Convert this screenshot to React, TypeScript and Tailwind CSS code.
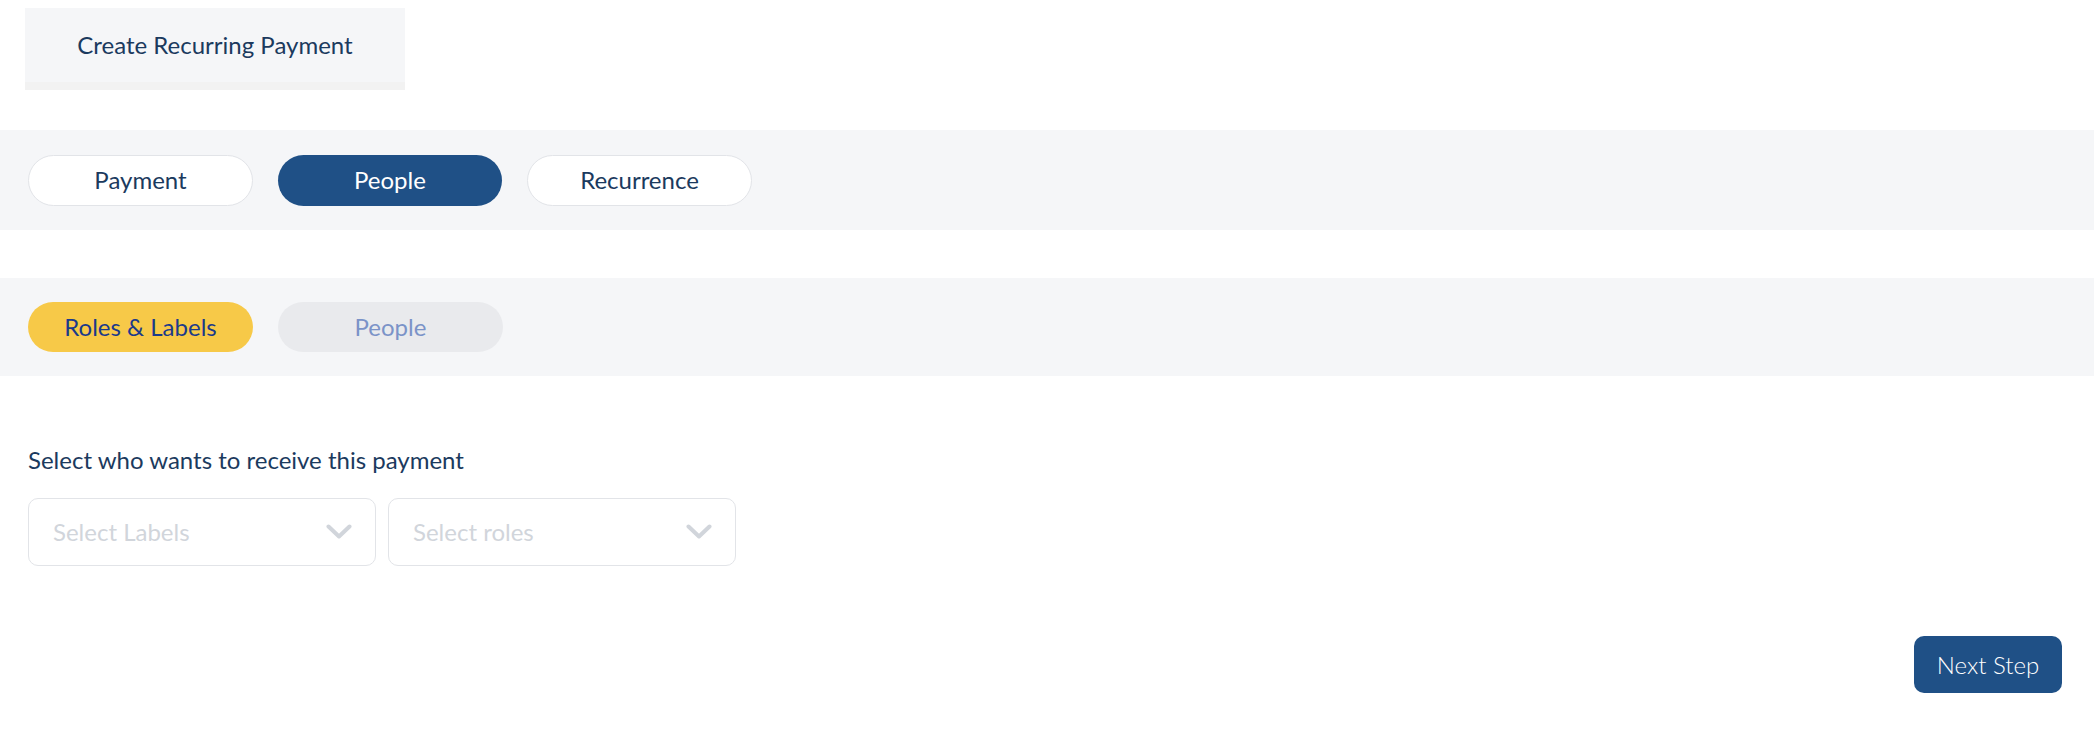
import React from "react";

function Chevron() {
  return (
    <svg width="26" height="16" viewBox="0 0 26 16" fill="none">
      <path d="M2.5 2.5 L13 12.5 L23.5 2.5" stroke="#d1d5db" strokeWidth="4" strokeLinecap="round" strokeLinejoin="round" />
    </svg>
  );
}

export default function App() {
  const font = { fontFamily: "Lato, 'Open Sans', sans-serif" };
  return (
    <div className="min-h-[730px] w-full bg-white text-[#1b3a5e]" style={font}>
      <div className="pt-2 pl-[25px]">
        <div className="flex h-[82px] w-[380px] items-center justify-center border-b-8 border-[#f2f2f2] bg-[#f5f6f8] text-[24px] text-[#1b3a5e]">
          <span>Create Recurring Payment</span>
        </div>
      </div>

      <div className="mt-10 flex h-[100px] items-center gap-[25px] bg-[#f5f6f8] px-7">
        <button className="h-[51px] w-[225px] rounded-full border border-[#e2e4e8] bg-white text-[24px] font-normal text-[#1b3a5e]">Payment</button>
        <button className="h-[51px] w-[224px] rounded-full bg-[#1f5086] text-[24px] font-normal text-white">People</button>
        <button className="h-[51px] w-[225px] rounded-full border border-[#e2e4e8] bg-white text-[24px] font-normal text-[#1b3a5e]">Recurrence</button>
      </div>

      <div className="mt-12 flex h-[98px] items-center gap-[25px] bg-[#f5f6f8] px-7">
        <button className="h-[50px] w-[225px] rounded-full bg-[#f7c948] text-[24px] font-normal text-[#1c3a8a]">Roles &amp; Labels</button>
        <button className="h-[50px] w-[225px] rounded-full bg-[#e9eaed] text-[24px] font-normal text-[#7b93c8]">People</button>
      </div>

      <div className="px-7 pt-[70px]">
        <div className="text-[24px] leading-[28px] text-[#1b3a5e]">Select who wants to receive this payment</div>
        <div className="mt-[24px] flex gap-3">
          <div className="flex h-[68px] w-[348px] items-center justify-between rounded-[10px] border border-[#e2e4e8] bg-white pl-[24px] pr-[23px]">
            <span className="text-[24px] text-[#d1d5db]">Select Labels</span>
            <Chevron />
          </div>
          <div className="flex h-[68px] w-[348px] items-center justify-between rounded-[10px] border border-[#e2e4e8] bg-white pl-[24px] pr-[23px]">
            <span className="text-[24px] text-[#d1d5db]">Select roles</span>
            <Chevron />
          </div>
        </div>
      </div>

      <div className="mt-[70px] flex justify-end pr-[32px]">
        <button className="h-[57px] w-[148px] rounded-[10px] bg-[#1f5086] text-[24px] font-light text-white">Next Step</button>
      </div>
    </div>
  );
}
